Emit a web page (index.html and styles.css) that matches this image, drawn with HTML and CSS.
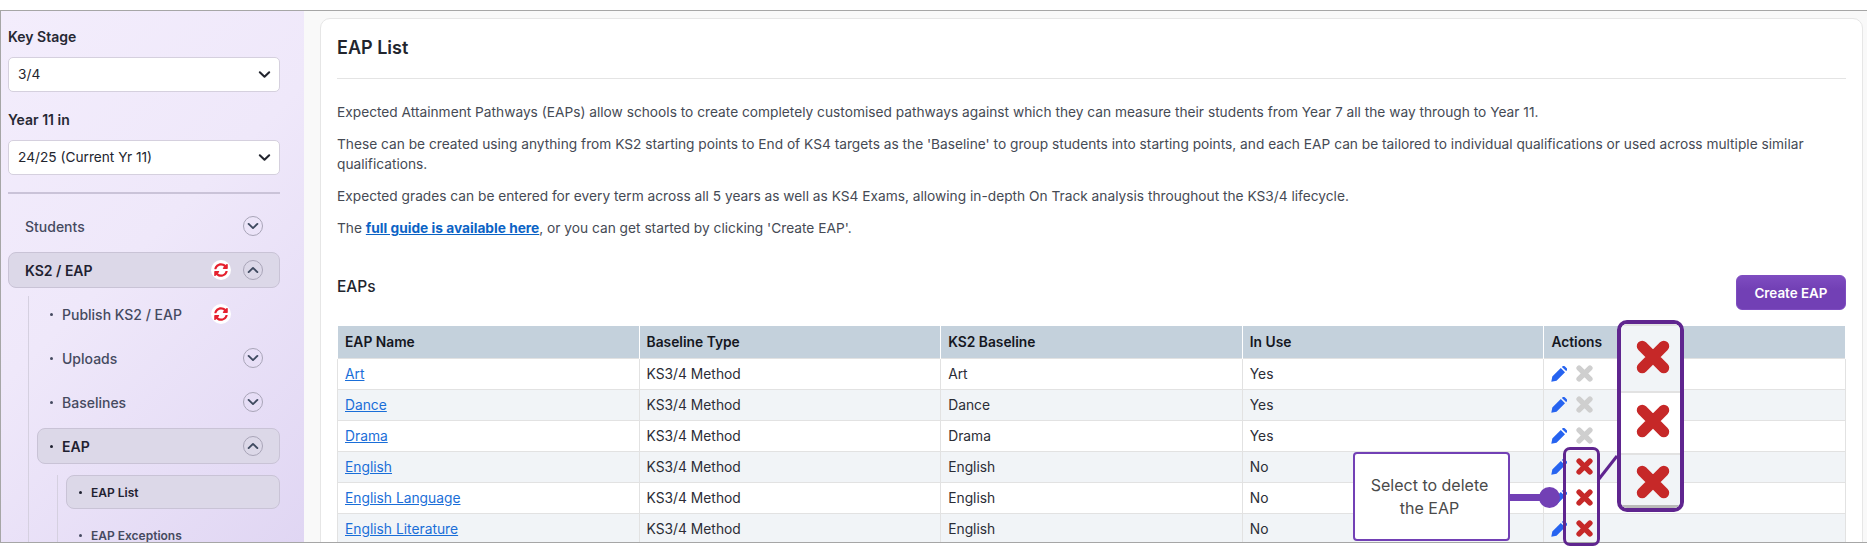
FILE: index.html
```html
<!DOCTYPE html>
<html lang="en">
<head>
  <meta charset="UTF-8">
  <meta name="viewport" content="width=device-width, initial-scale=1.0">
  <title>EAP List</title>
  <link rel="stylesheet" href="styles.css">
</head>
<body>
  <svg class="icon-defs" aria-hidden="true">
    <symbol id="i-times" viewBox="0 0 33 33"><path d="M6 6 27 27M27 6 6 27" fill="none" stroke="currentColor" stroke-width="10.5" stroke-linecap="round"/></symbol>
    <symbol id="i-pencil" viewBox="0 0 16 16"><path d="M.3 15.7 1.3 10.5 9.8 2l4.2 4.2-8.5 8.5zM10.9.9l.4-.4c.8-.8 1.9-.8 2.7 0l1.5 1.5c.8.8.8 1.9 0 2.7l-.4.4z"/></symbol>
    <symbol id="i-sync" viewBox="0 0 512 512"><path d="M370.72 133.28C339.46 104.03 298.88 88 255.82 88c-77.49.07-144.38 53.2-162.85 126.85-1.35 5.36-6.12 9.15-11.65 9.15H24.1c-7.49 0-13.17-6.8-11.8-14.16C33.93 94.92 134.81 8 256 8c66.45 0 126.79 26.14 171.31 68.69L463.03 40.97C478.15 25.85 504 36.56 504 57.94V192c0 13.25-10.75 24-24 24H345.94c-21.38 0-32.09-25.85-16.97-40.97l41.75-41.75zM32 296h134.06c21.38 0 32.09 25.85 16.97 40.97l-41.75 41.75c31.26 29.25 71.84 45.28 114.9 45.28 77.45-.07 144.35-53.17 162.83-126.85 1.35-5.36 6.12-9.15 11.65-9.15h57.22c7.49 0 13.17 6.8 11.8 14.16C478.07 417.08 377.19 504 256 504c-66.45 0-126.79-26.14-171.31-68.69l-35.72 35.72C33.85 486.15 8 475.44 8 454.06V320c0-13.25 10.75-24 24-24z"/></symbol>
    <symbol id="i-down" viewBox="0 0 16 16"><path d="M3 5.6 8 10.4l5-4.8" fill="none" stroke="currentColor" stroke-width="2.2" stroke-linecap="round" stroke-linejoin="round"/></symbol>
    <symbol id="i-up" viewBox="0 0 16 16"><path d="M3 10.4 8 5.6l5 4.8" fill="none" stroke="currentColor" stroke-width="2.2" stroke-linecap="round" stroke-linejoin="round"/></symbol>
  </svg>

  <div class="frame">
    <aside class="sidebar">
      <label class="field-label">Key Stage</label>
      <div class="select">3/4<svg class="select-arrow"><use href="#i-down"/></svg></div>
      <label class="field-label">Year 11 in</label>
      <div class="select">24/25 (Current Yr 11)<svg class="select-arrow"><use href="#i-down"/></svg></div>
      <div class="side-rule"></div>

      <div class="nav-row top">
        <span class="nav-text">Students</span>
        <span class="toggle"><svg><use href="#i-down"/></svg></span>
      </div>
      <div class="nav-row top open">
        <span class="nav-text">KS2 / EAP</span>
        <span class="sync"><svg><use href="#i-sync"/></svg></span>
        <span class="toggle"><svg><use href="#i-up"/></svg></span>
      </div>

      <div class="sub-nav">
        <div class="nav-row second">
          <span class="dot"></span><span class="nav-text">Publish KS2 / EAP</span>
          <span class="sync no-toggle"><svg><use href="#i-sync"/></svg></span>
        </div>
        <div class="nav-row second">
          <span class="dot"></span><span class="nav-text">Uploads</span>
          <span class="toggle"><svg><use href="#i-down"/></svg></span>
        </div>
        <div class="nav-row second">
          <span class="dot"></span><span class="nav-text">Baselines</span>
          <span class="toggle"><svg><use href="#i-down"/></svg></span>
        </div>
        <div class="nav-row second open">
          <span class="dot"></span><span class="nav-text">EAP</span>
          <span class="toggle"><svg><use href="#i-up"/></svg></span>
        </div>
        <div class="sub-nav inner">
          <div class="nav-row third open">
            <span class="dot"></span><span class="nav-text">EAP List</span>
          </div>
          <div class="nav-row third">
            <span class="dot"></span><span class="nav-text">EAP Exceptions</span>
          </div>
        </div>
      </div>
    </aside>

    <main class="main">
      <div class="card-clip">
        <div class="card">
          <h1>EAP List</h1>
          <div class="intro">
            <p>Expected Attainment Pathways (EAPs) allow schools to create completely customised pathways against which they can measure their students from Year 7 all the way through to Year 11.</p>
            <p>These can be created using anything from KS2 starting points to End of KS4 targets as the 'Baseline' to group students into starting points, and each EAP can be tailored to individual qualifications or used across multiple similar qualifications.</p>
            <p>Expected grades can be entered for every term across all 5 years as well as KS4 Exams, allowing in-depth On Track analysis throughout the KS3/4 lifecycle.</p>
            <p>The <a class="guide-link" href="#">full guide is available here</a>, or you can get started by clicking 'Create EAP'.</p>
          </div>

          <div class="table-head">
            <h2>EAPs</h2>
            <button class="create-btn">Create EAP</button>
          </div>

          <table class="eap-table">
            <thead>
              <tr><th>EAP Name</th><th>Baseline Type</th><th>KS2 Baseline</th><th>In Use</th><th>Actions</th></tr>
            </thead>
            <tbody>
              <tr>
                <td><a href="#">Art</a></td><td>KS3/4 Method</td><td>Art</td><td>Yes</td>
                <td><svg class="act edit"><use href="#i-pencil"/></svg><svg class="act off"><use href="#i-times"/></svg></td>
              </tr>
              <tr>
                <td><a href="#">Dance</a></td><td>KS3/4 Method</td><td>Dance</td><td>Yes</td>
                <td><svg class="act edit"><use href="#i-pencil"/></svg><svg class="act off"><use href="#i-times"/></svg></td>
              </tr>
              <tr>
                <td><a href="#">Drama</a></td><td>KS3/4 Method</td><td>Drama</td><td>Yes</td>
                <td><svg class="act edit"><use href="#i-pencil"/></svg><svg class="act off"><use href="#i-times"/></svg></td>
              </tr>
              <tr>
                <td><a href="#">English</a></td><td>KS3/4 Method</td><td>English</td><td>No</td>
                <td><svg class="act edit"><use href="#i-pencil"/></svg><svg class="act del"><use href="#i-times"/></svg></td>
              </tr>
              <tr>
                <td><a href="#">English Language</a></td><td>KS3/4 Method</td><td>English</td><td>No</td>
                <td><svg class="act edit"><use href="#i-pencil"/></svg><svg class="act del"><use href="#i-times"/></svg></td>
              </tr>
              <tr>
                <td><a href="#">English Literature</a></td><td>KS3/4 Method</td><td>English</td><td>No</td>
                <td><svg class="act edit"><use href="#i-pencil"/></svg><svg class="act del"><use href="#i-times"/></svg></td>
              </tr>
            </tbody>
          </table>
        </div>
      </div>

      <!-- Annotation over the table -->
      <div class="callout-line"></div>
      <div class="callout-dot"></div>
      <div class="callout">Select to delete the EAP</div>
      <div class="small-frame"></div>
      <svg class="link-line" width="20" height="26"><line x1="1" y1="25" x2="19" y2="2"/></svg>
      <div class="big-frame">
        <div class="big-cell first"><svg><use href="#i-times"/></svg></div>
        <div class="big-cell second"><svg><use href="#i-times"/></svg></div>
        <div class="big-cell third"><svg><use href="#i-times"/></svg></div>
      </div>
    </main>
  </div>
</body>
</html>
```

FILE: styles.css
```css
/* General Styles */
* {
  box-sizing: border-box;
}

html, body {
  height: 100%;
}

body {
  margin: 0;
  padding: 10px 0 4px;
  overflow: hidden;
  background-color: #fff;
  color: #22252e;
  font-family: Inter, "Noto Sans", sans-serif;
  font-size: 14px;
}

.icon-defs {
  display: none;
}

.frame {
  display: flex;
  height: 533px;
  border-top: 1px solid #a6a6a6;
  border-bottom: 1px solid #a6a6a6;
  border-left: 1px solid #a6a6a6;
  background-color: #f9f9f9;
}

/* Sidebar */
.sidebar {
  flex: none;
  width: 303px;
  overflow: hidden;
  padding: 15px 24px 0 7px;
  background: linear-gradient(135deg, #f3edfc 0%, #efe8fa 45%, #e0d6f3 100%);
}

.field-label {
  display: block;
  height: 17px;
  margin-bottom: 14px;
  font-size: 14px;
  font-weight: 600;
  line-height: 22px;
  color: #262833;
}

.select {
  position: relative;
  height: 35px;
  margin-bottom: 17px;
  padding-left: 9px;
  border: 1px solid #d5d0de;
  border-radius: 5px;
  background: #fff;
  font-size: 13.7px;
  line-height: 33px;
}

.select-arrow {
  position: absolute;
  top: 9px;
  right: 7px;
  width: 15px;
  height: 15px;
  color: #22252e;
}

.side-rule {
  height: 2px;
  margin: 0 0 14px;
  background: #cac3d8;
}

.nav-row {
  display: flex;
  align-items: center;
  border: 1px solid transparent;
  border-radius: 8px;
  font-weight: 500;
  color: #454a60;
}

.nav-row.open {
  border-color: #c9c3d6;
  background: #dcd8e8;
  color: #1f2130;
  font-weight: 600;
}

.nav-row.top {
  height: 36px;
  margin-bottom: 8px;
  padding: 0 16px;
}

.nav-row.second {
  height: 36px;
  margin-bottom: 8px;
  padding: 0 16px 0 12px;
}

.nav-row.third {
  height: 34px;
  margin-bottom: 9px;
  padding: 0 16px 0 12px;
  font-size: 12px;
  font-weight: 600;
}

.nav-text {
  flex: 1;
}

.dot {
  flex: none;
  width: 3px;
  height: 3px;
  margin-right: 9px;
  border-radius: 50%;
  background: #454a60;
}

.open > .dot {
  background: #1f2130;
}

.toggle {
  display: flex;
  flex: none;
  align-items: center;
  justify-content: center;
  width: 20px;
  height: 20px;
  border: 1px solid #a9a5b8;
  border-radius: 50%;
  color: #3f4a60;
}

.toggle svg {
  width: 14px;
  height: 14px;
}

.sync {
  display: flex;
  flex: none;
  align-items: center;
  justify-content: center;
  width: 20px;
  height: 20px;
  margin-right: 12px;
  border-radius: 50%;
  background: #fff;
  fill: #e5202e;
}

.sync.no-toggle {
  margin-right: 32px;
}

.sync svg {
  width: 14px;
  height: 14px;
}

.sub-nav {
  margin: 8px 0 0 20px;
  padding: 0 0 0 8px;
  border-left: 1px solid #d5d0e0;
}

.sub-nav.inner {
  margin: 11px 0 0 20px;
}

/* Main */
.main {
  position: relative;
  flex: 1;
  min-width: 0;
}

.card-clip {
  height: 100%;
  overflow: hidden;
  padding: 7px 4px 0 16px;
}

.card {
  height: 600px;
  padding: 0 16px;
  border: 1px solid #e6e6e6;
  border-radius: 10px;
  background: #fff;
}

h1 {
  height: 60px;
  margin: 0 0 23px;
  border-bottom: 1px solid #e4e4e4;
  font-size: 18px;
  font-weight: 600;
  line-height: 58px;
  color: #22252e;
}

.intro p {
  margin: 0 0 12px;
  font-size: 13.73px;
  line-height: 20px;
  color: #454a54;
}

.guide-link {
  color: #0b63c5;
  font-weight: 700;
}

.table-head {
  display: flex;
  justify-content: space-between;
  height: 49px;
  margin-top: 39px;
}

h2 {
  margin: 0;
  font-size: 15.5px;
  font-weight: 500;
  line-height: 20px;
  color: #22252e;
}

.create-btn {
  width: 110px;
  height: 35px;
  margin-top: -2px;
  border: 1px solid #7e4cc0;
  border-radius: 6px;
  background: linear-gradient(#7e4cc0, #7240b5 40%);
  color: #fff;
  font-family: inherit;
  font-size: 13.4px;
  font-weight: 600;
}

.eap-table {
  width: 100%;
  border-collapse: collapse;
  table-layout: fixed;
  font-size: 13.8px;
}

.eap-table th {
  height: 32px;
  padding: 0 7px;
  border: 1px solid #fff;
  border-width: 0 1px;
  background: #c4d1dc;
  text-align: left;
  font-weight: 600;
  color: #15171f;
}

.eap-table td {
  height: 31px;
  padding: 0 7px;
  border: 1px solid #e2e2e2;
  color: #2b2d36;
}

.eap-table tbody tr:nth-child(even) td {
  background: #f1f4f7;
}

.eap-table a {
  color: #1a6ed8;
}

.act {
  width: 17px;
  height: 17px;
  vertical-align: middle;
}

.act.edit {
  width: 16px;
  height: 16px;
  margin-right: 9px;
  fill: #2663f0;
}

.act.off {
  color: #cfcfcf;
}

.act.del {
  color: #c62828;
}

/* Annotation */
.callout {
  position: absolute;
  top: 441px;
  left: 1049px;
  display: flex;
  align-items: center;
  width: 157px;
  height: 89px;
  padding: 0 14px 0 10px;
  border: 2px solid #7240b5;
  border-radius: 4px;
  background: #fff;
  color: #4a4a4a;
  text-align: center;
  font-size: 16px;
  line-height: 23px;
}

.callout-line {
  position: absolute;
  top: 483px;
  left: 1206px;
  width: 36px;
  height: 7px;
  background: #7240b5;
}

.callout-dot {
  position: absolute;
  top: 476px;
  left: 1235px;
  width: 21px;
  height: 21px;
  border-radius: 50%;
  background: #7240b5;
}

.small-frame {
  position: absolute;
  top: 436px;
  left: 1259px;
  width: 37px;
  height: 99px;
  border: 3px solid #5f258f;
  border-radius: 7px;
}

.link-line {
  position: absolute;
  top: 443px;
  left: 1294px;
}

.link-line line {
  stroke: #5f258f;
  stroke-width: 3;
}

.big-frame {
  position: absolute;
  top: 309px;
  left: 1313px;
  width: 67px;
  height: 192px;
  overflow: hidden;
  border: 4px solid #5f258f;
  border-radius: 10px;
  background: #fff;
}

.big-cell {
  display: flex;
  align-items: center;
  justify-content: center;
  padding-left: 5px;
  color: #c62828;
}

.big-cell.first {
  height: 67px;
  padding-bottom: 3px;
  border-top: 2px solid #e2e2e2;
  background: #f1f4f7;
}

.big-cell.second {
  height: 62px;
  padding-bottom: 4px;
  border-top: 2px solid #e2e2e2;
}

.big-cell.third {
  height: 55px;
  padding-top: 3px;
  border-top: 2px solid #e2e2e2;
  border-bottom: 3px solid #b9b9b9;
  background: #f1f4f7;
}

.big-cell svg {
  width: 34px;
  height: 34px;
}
```
